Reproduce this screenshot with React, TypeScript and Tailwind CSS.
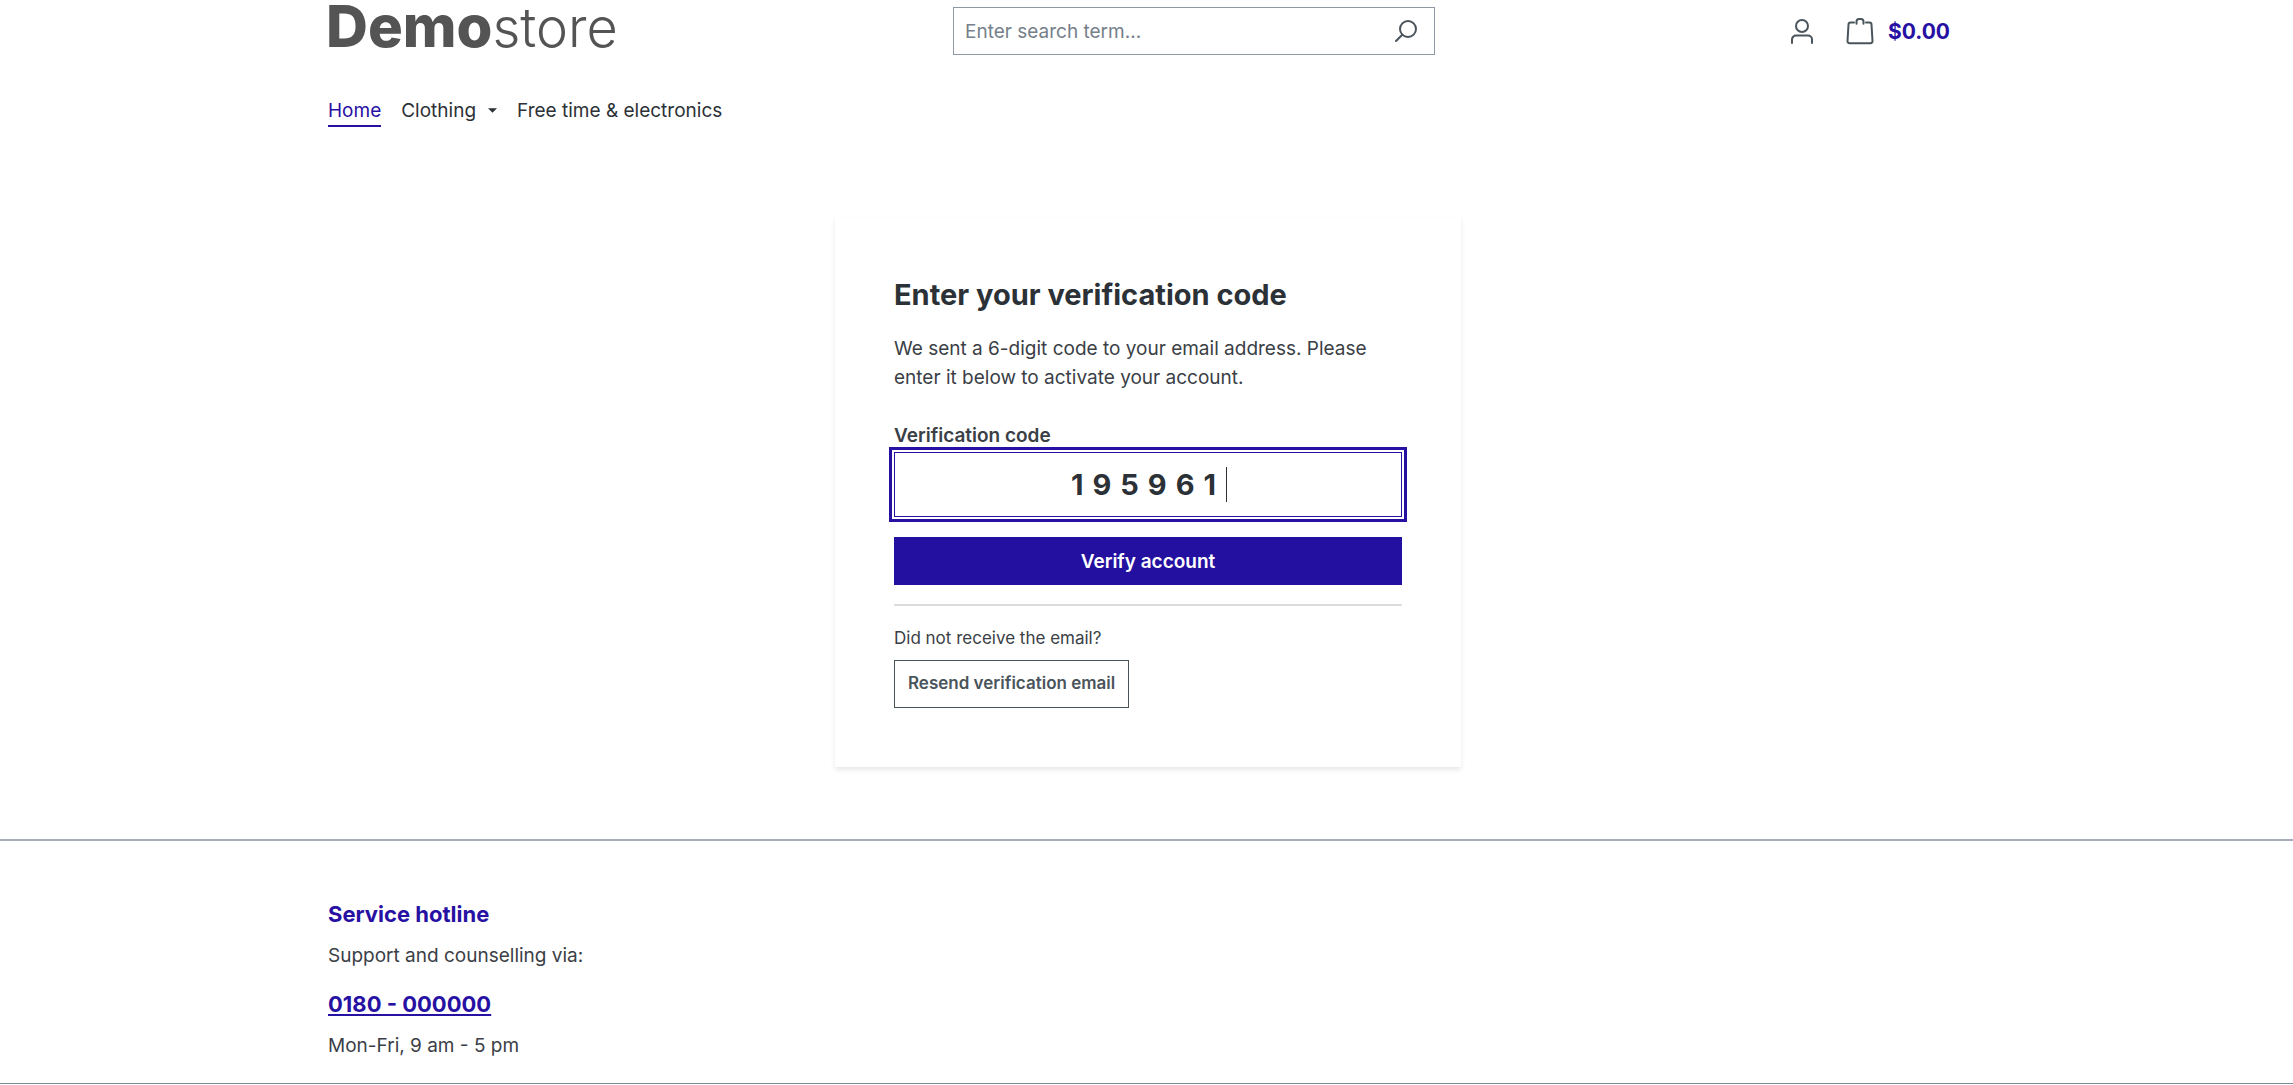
import { useState } from "react";

const container = "mx-auto w-full max-w-[1643px] pl-[3px]";

function SearchIcon() {
    return (
        <svg className="w-6 h-6" viewBox="0 0 24 24" fill="none" stroke="#4a545b" strokeWidth="2" strokeLinecap="round">
            <circle cx="14" cy="10" r="8" />
            <path d="M8.3 15.7 2 22" />
        </svg>
    );
}

function UserIcon() {
    return (
        <svg className="w-6 h-[27px]" viewBox="0 0 24 27" fill="none" stroke="#4a545b" strokeWidth="2" strokeLinecap="round">
            <circle cx="12" cy="8" r="6" />
            <path d="M2 25v-3.500a4 4 0 0 1 4-4h12a4 4 0 0 1 4 4V25" />
        </svg>
    );
}

function BagIcon() {
    return (
        <svg className="w-7 h-7" viewBox="0 0 28 28" fill="none" stroke="#4a545b" strokeWidth="2" strokeLinecap="round" strokeLinejoin="round">
            <path d="M8 5.500H4.500a2 2 0 0 0-2 2L1.500 24a2 2 0 0 0 2 2.200h21a2 2 0 0 0 2-2.200l-1-16.500a2 2 0 0 0-2-2H20" />
            <path d="M10.500 6.800V4.500a2.500 2.500 0 0 1 2.500-2.500h2a2.500 2.500 0 0 1 2.500 2.500v2.300" />
        </svg>
    );
}

function Header() {
    return (
        <header className={container}>
            <div className="grid grid-cols-[1fr_482px_1fr] items-start">
                <a href="#" className="-ml-0.5 text-[58px] leading-[52px] text-[#545454] whitespace-nowrap">
                    <span className="font-extrabold">Demo</span>
                    <span className="text-[54px] font-light">store</span>
                </a>

                <form className="mt-[7px] flex h-12 ml-[46px] -mr-[46px] items-center border border-[#8f98a5] pl-[11px] pr-4" onSubmit={(e) => e.preventDefault()}>
                    <input
                        type="search"
                        aria-label="Search"
                        placeholder="Enter search term..."
                        className="min-w-0 flex-1 pt-0.5 text-[19px] outline-none placeholder:text-[#75808a]"
                    />
                    <button type="submit" aria-label="Search">
                        <SearchIcon />
                    </button>
                </form>

                <div className="mt-[7px] flex h-12 items-center justify-end pr-[18px]">
                    <button type="button" aria-label="Your account" className="mr-8">
                        <UserIcon />
                    </button>
                    <a href="#" className="flex items-center gap-[14px] text-[21px] leading-[29px] font-bold text-[#2711a3]">
                        <BagIcon />
                        $0.00
                    </a>
                </div>
            </div>

            <nav className="mt-[41px] flex gap-5 text-[19px] leading-[29px] text-[#2b3136]">
                <a href="#" className="border-b-2 border-[#2711a3] text-[#2711a3]">Home</a>
                <a href="#" className="flex">
                    Clothing
                    <svg className="mt-3 ml-3 h-[5px] w-[9px]" viewBox="0 0 10 5" fill="#2b3136">
                        <path d="M0 0h10L5 5z" />
                    </svg>
                </a>
                <a href="#">Free time &amp; electronics</a>
            </nav>
        </header>
    );
}

function VerificationCard() {
    const [code, setCode] = useState("195961");

    return (
        <section className="mx-auto w-[626px] px-[59px] pt-[60px] pb-[59px] shadow-[0_3px_5px_rgba(0,0,0,0.09)]">
            <h1 className="text-[29px] leading-[35px] font-bold text-[#2b3136]">Enter your verification code</h1>
            <p className="mt-[22px] text-[19px] leading-[29px]">
                We sent a 6-digit code to your email address. Please enter it below to activate your account.
            </p>

            <form onSubmit={(e) => e.preventDefault()}>
                <label htmlFor="code" className="mt-[29px] block text-[19px] leading-[29px] font-semibold">
                    Verification code
                </label>
                <div className="relative mt-0.5">
                    <input
                        id="code"
                        value={code}
                        maxLength={6}
                        inputMode="numeric"
                        onChange={(e) => setCode(e.target.value)}
                        className="block h-[65px] w-full border border-[#2711a3] text-center text-[29px] font-bold tracking-[9px] text-[#2b3136] outline-3 outline-offset-2 outline-[#2711a3]"
                    />
                    <span className="absolute top-[15px] left-1/2 ml-[78px] h-[35px] w-px bg-[#2b3136]" />
                </div>
                <button type="submit" className="mt-5 h-12 w-full bg-[#2410a0] pt-0.5 text-[19px] font-semibold text-white">
                    Verify account
                </button>
            </form>

            <hr className="mt-[19px] border-t-2 border-[#dcdcdc]" />
            <p className="mt-5 text-[17px] leading-[25px]">Did not receive the email?</p>
            <button type="button" className="mt-[9px] h-12 border border-[#4a545b] px-[13px] text-[17px] font-semibold text-[#4a545b]">
                Resend verification email
            </button>
        </section>
    );
}

function Footer() {
    return (
        <footer className="mt-[72px] border-t-2 border-b border-t-[#a6acb9] border-b-[#7b8696]">
            <div className={container + " pt-[57px] pb-[23px]"}>
                <h2 className="text-[22px] leading-[33px] font-bold text-[#2711a3]">Service hotline</h2>
                <p className="mt-[10px] text-[19px] leading-[29px]">Support and counselling via:</p>
                <a href="tel:0180000000" className="mt-[18px] block w-fit text-[22px] leading-[33px] font-bold text-[#2711a3] underline">
                    0180 - 000000
                </a>
                <p className="mt-[10px] text-[19px] leading-[29px]">Mon-Fri, 9 am - 5 pm</p>
            </div>
        </footer>
    );
}

function App() {
    return (
        <div className="bg-white font-['Inter',sans-serif] text-[#3a4046]">
            <Header />
            <main className={container + " mt-[90px]"}>
                <VerificationCard />
            </main>
            <Footer />
        </div>
    );
}

export default App
